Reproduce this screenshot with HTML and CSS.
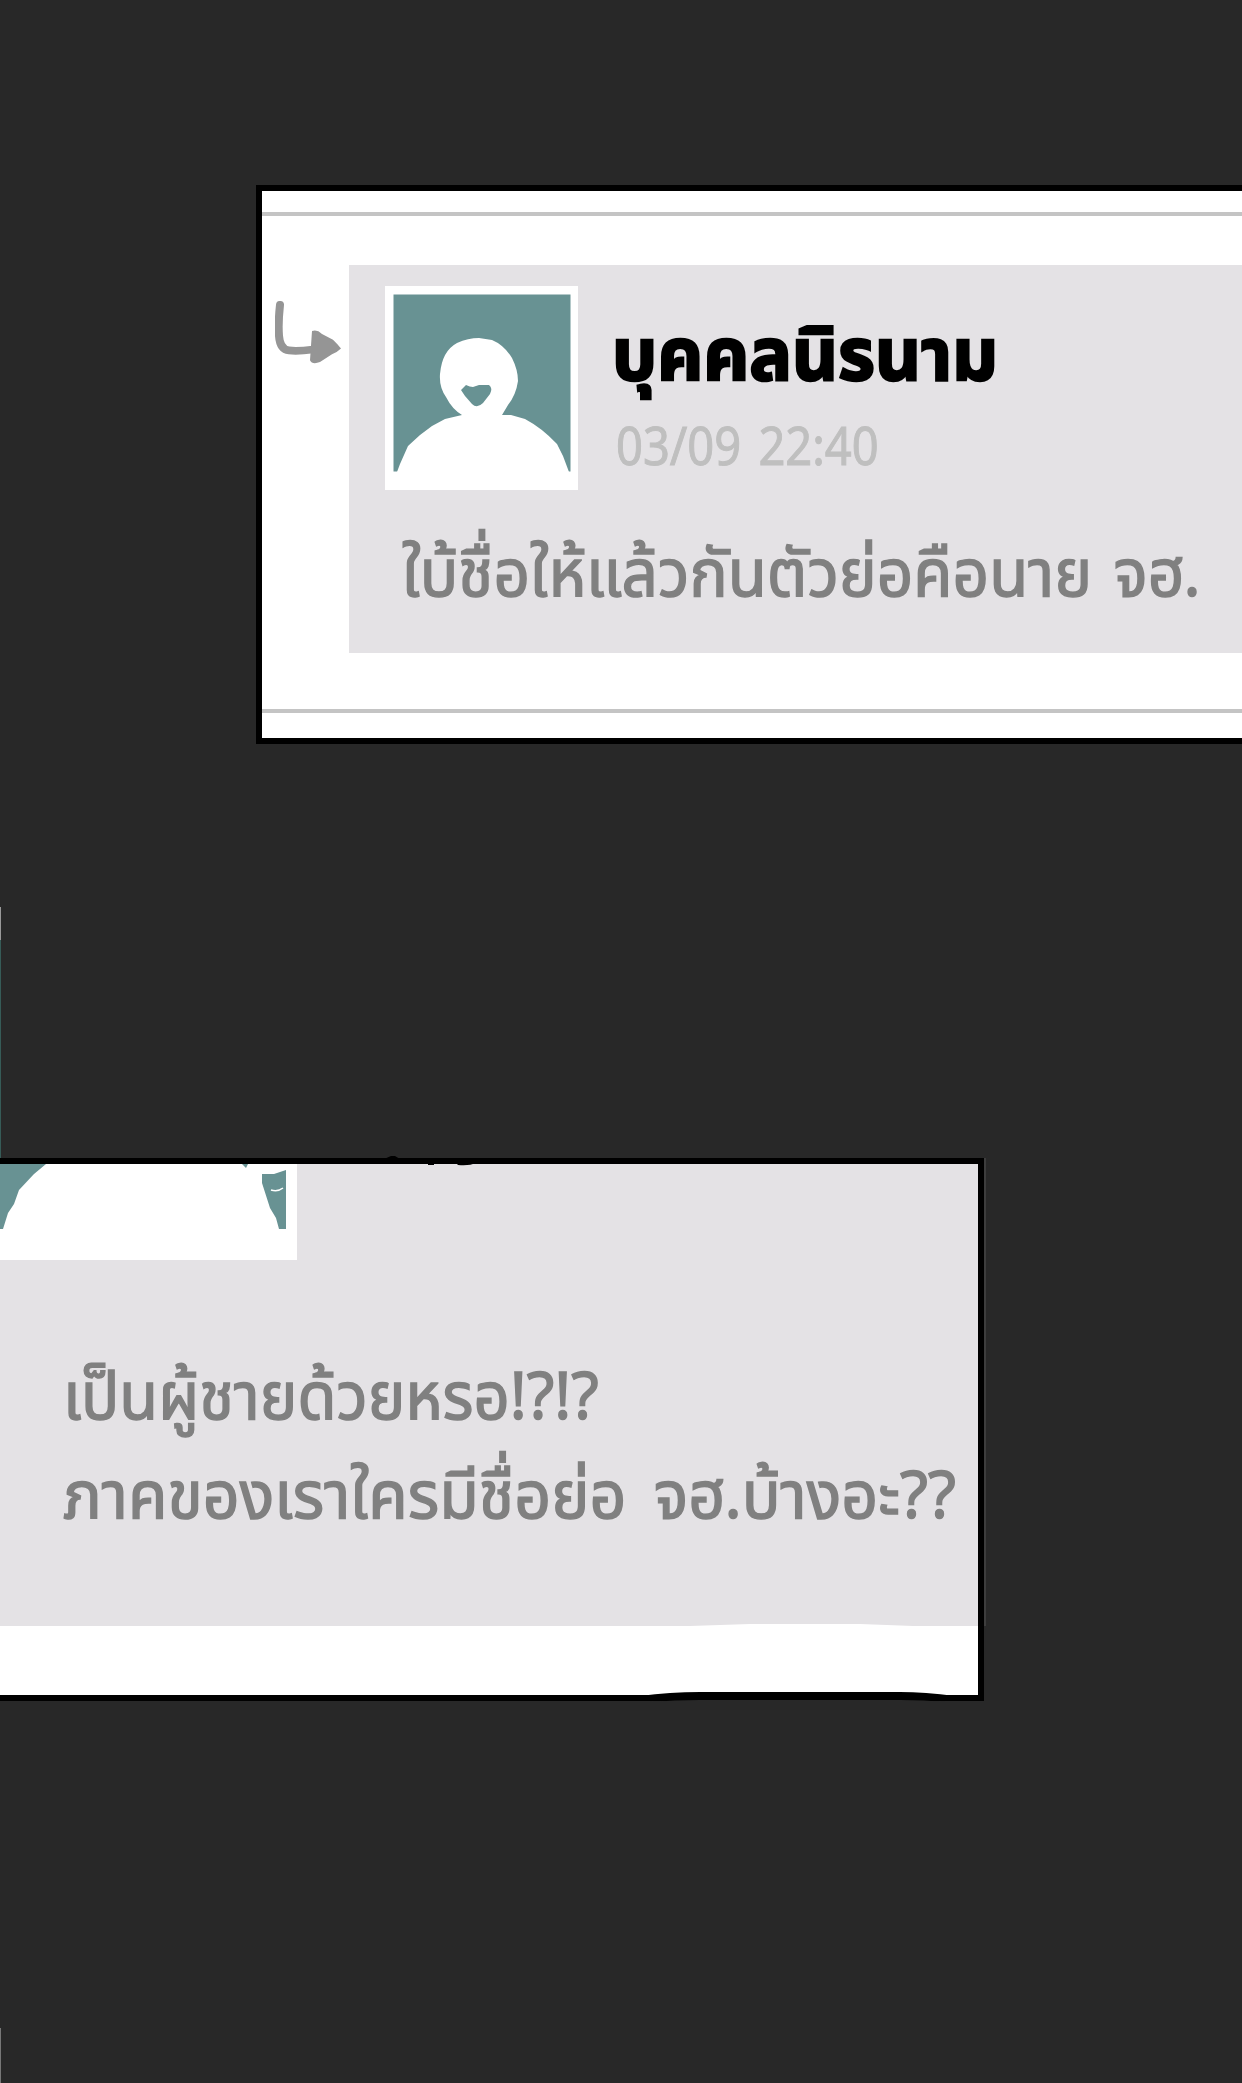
FILE: index.html
```html
<!DOCTYPE html>
<html lang="th">
<head>
    <meta charset="UTF-8">
    <meta name="viewport" content="width=device-width, initial-scale=1.0">
    <title>บุคคลนิรนาม</title>
    <link rel="stylesheet" href="styles.css">
</head>
<body>
    <div class="page">
        <div class="edge edge-top"></div>
        <div class="edge edge-bottom"></div>

        <div class="panel reply-panel">
            <div class="rule"></div>
            <div class="reply-row">
                <svg class="reply-arrow" width="66" height="64" viewBox="0 0 66 66" preserveAspectRatio="none">
                    <path d="M5 4 Q3 23 4 36 Q5 50 14 51 Q23 52 38 50" fill="none" stroke="#959595" stroke-width="8" stroke-linecap="round"/>
                    <path d="M37 31 Q42 29 47 34 L58 40 Q63 45 66 49 Q62 53 57 55 L45 63 Q37 66 35 61 Z" fill="#959595"/>
                </svg>
                <div class="comment">
                    <div class="comment-header">
                        <svg class="avatar" width="193" height="204" viewBox="0 0 193 204">
                            <rect width="193" height="204" fill="#fff"/>
                            <rect x="8.500" y="8.500" width="177" height="177" fill="#689293"/>
                            <path d="M12 186 L15 178 L23 160 L35 149 L47 140 L60 133 L77 129 Q67 123 61 111 Q54 101 55 88 Q57 65 72 57 Q83 52 94 52 L107 54 Q119 59 127 72 Q133 84 133 95 Q131 109 123 119 L117 129 L126 129 L140 133 Q157 142 172 158 L178 170 L184 186 Z" fill="#fff"/>
                            <path d="M76 104 L81 99 Q85 101 88 101 L94 99 L104 99 Q108 102 105 108 L98 117 Q92 123 87 118 L80 110 Z" fill="#689293"/>
                        </svg>
                        <div class="author">
                            <div class="author-name"><span>บุคคลนิรนาม</span></div>
                            <div class="comment-date"><span>03/09&nbsp; 22:40</span></div>
                        </div>
                    </div>
                    <p class="comment-text"><span>ใบ้ชื่อให้แล้วกันตัวย่อคือนาย&nbsp; จฮ.</span></p>
                </div>
            </div>
            <div class="rule"></div>
        </div>

        <div class="panel question-panel">
            <div class="question">
                <svg class="avatar-cropped" width="297" height="96" viewBox="0 0 297 96">
                    <rect width="297" height="96" fill="#fff"/>
                    <path d="M0 0 H46 L34 10 L19 26 L14 40 L8 49 L3 65 H0 Z" fill="#689293"/>
                    <path d="M242 0 H248 L246 4 Z" fill="#689293"/>
                    <path d="M262 10 L274 10 L286 6 V65 H279 L276 54 L270 44 L262 19 Z" fill="#689293"/>
                    <path d="M271 26 Q278 28 283 24" fill="none" stroke="#fff" stroke-width="1.500"/>
                </svg>
                <p class="question-text question-first"><span>เป็นผู้ชายด้วยหรอ!?!?</span></p>
                <p class="question-text"><span>ภาคของเราใครมีชื่อย่อ&nbsp; จฮ.บ้างอะ??</span></p>
            </div>
            <!-- Hand-drawn unevenness of the panel outline -->
            <svg class="outline" width="986" height="543" viewBox="0 0 986 543">
                <path d="M384 1 L391 -2 H395 L400 1 Z M428 5 H434 V7 H428 Z M456 5 H475 Q470 8 458 7 Z" fill="#000"/>
                <path d="M985 0 V468" stroke="#444" stroke-width="1.500"/>
                <path d="M660 469 L750 466 H860 L940 469 Z" fill="#fff"/>
                <path d="M640 538 Q670 534 700 534 H900 Q925 534 955 538 Z" fill="#000"/>
                <path d="M650 544 Q675 542 700 542 H900 Q925 542 945 544 Z" fill="#282828"/>
            </svg>
        </div>
    </div>
</body>
</html>
```

FILE: styles.css
```css
body {
    margin: 0;
    background-color: #282828;
    font-family: "Noto Sans Thai", "Noto Sans", sans-serif;
}

.page {
    position: relative;
    box-sizing: border-box;
    height: 2083px;
    padding-top: 185px;
    overflow: hidden;
}

.panel {
    box-sizing: border-box;
    background-color: #fff;
    border: 6px solid #000;
}

.reply-panel {
    height: 559px;
    margin-left: 256px;
    padding-top: 21px;
    border-right: none;
}

.rule {
    height: 4px;
    background-color: #c4c4c4;
}

.reply-row {
    display: flex;
    height: 493px;
}

.reply-arrow {
    margin: 85px 8px 0 13px;
}

.comment {
    flex: 1;
    height: 388px;
    margin-top: 49px;
    background-color: #e4e2e5;
}

.comment-header {
    display: flex;
    gap: 36px;
    height: 204px;
    padding: 21px 0 0 36px;
}

.author {
    padding-top: 23px;
}

.author-name,
.comment-date,
.comment-text,
.question-text {
    margin: 0;
    white-space: nowrap;
}

.author-name span,
.comment-date span,
.comment-text span,
.question-text span {
    display: inline-block;
    transform-origin: left center;
}

.author-name {
    height: 110px;
    font-size: 72px;
    font-weight: bold;
    line-height: 98px;
    -webkit-text-stroke: 2.5px #000;
}

.author-name span {
    margin-left: -2px;
    transform: scaleX(0.99);
}

.comment-date {
    height: 60px;
    color: #bfbfbf;
    font-size: 52px;
    line-height: 60px;
    word-spacing: -4px;
    -webkit-text-stroke: 1px #bfbfbf;
}

.comment-date span {
    margin-left: 2px;
    transform: scaleX(0.905);
}

.comment-text,
.question-text {
    color: #808080;
    font-size: 66px;
    line-height: 99px;
    -webkit-text-stroke: 1.5px #808080;
}

.comment-text {
    padding-left: 53px;
    padding-top: 37px;
    word-spacing: -6px;
}

.comment-text span {
    transform: scaleX(0.967);
}

.question-panel {
    position: relative;
    width: 984px;
    height: 543px;
    margin-top: 414px;
    border-left: none;
}

.question {
    height: 462px;
    background-color: #e4e2e5;
}

.avatar-cropped {
    display: block;
    margin-bottom: 90px;
}

.question-text {
    padding-left: 63px;
    word-spacing: -3px;
}

.question-text span {
    transform: scaleX(0.976);
}

.question-first span {
    transform: scaleX(0.96);
}

.outline {
    position: absolute;
    top: -6px;
    left: 0;
    overflow: visible;
}

/* Slivers of the neighbouring panels at the left edge */
.edge {
    position: absolute;
    left: 0;
    width: 1px;
}

.edge-top {
    top: 907px;
    height: 251px;
    background: linear-gradient(#999 33px, #365b57 33px);
}

.edge-bottom {
    top: 2028px;
    height: 55px;
    background-color: #777;
}
```
